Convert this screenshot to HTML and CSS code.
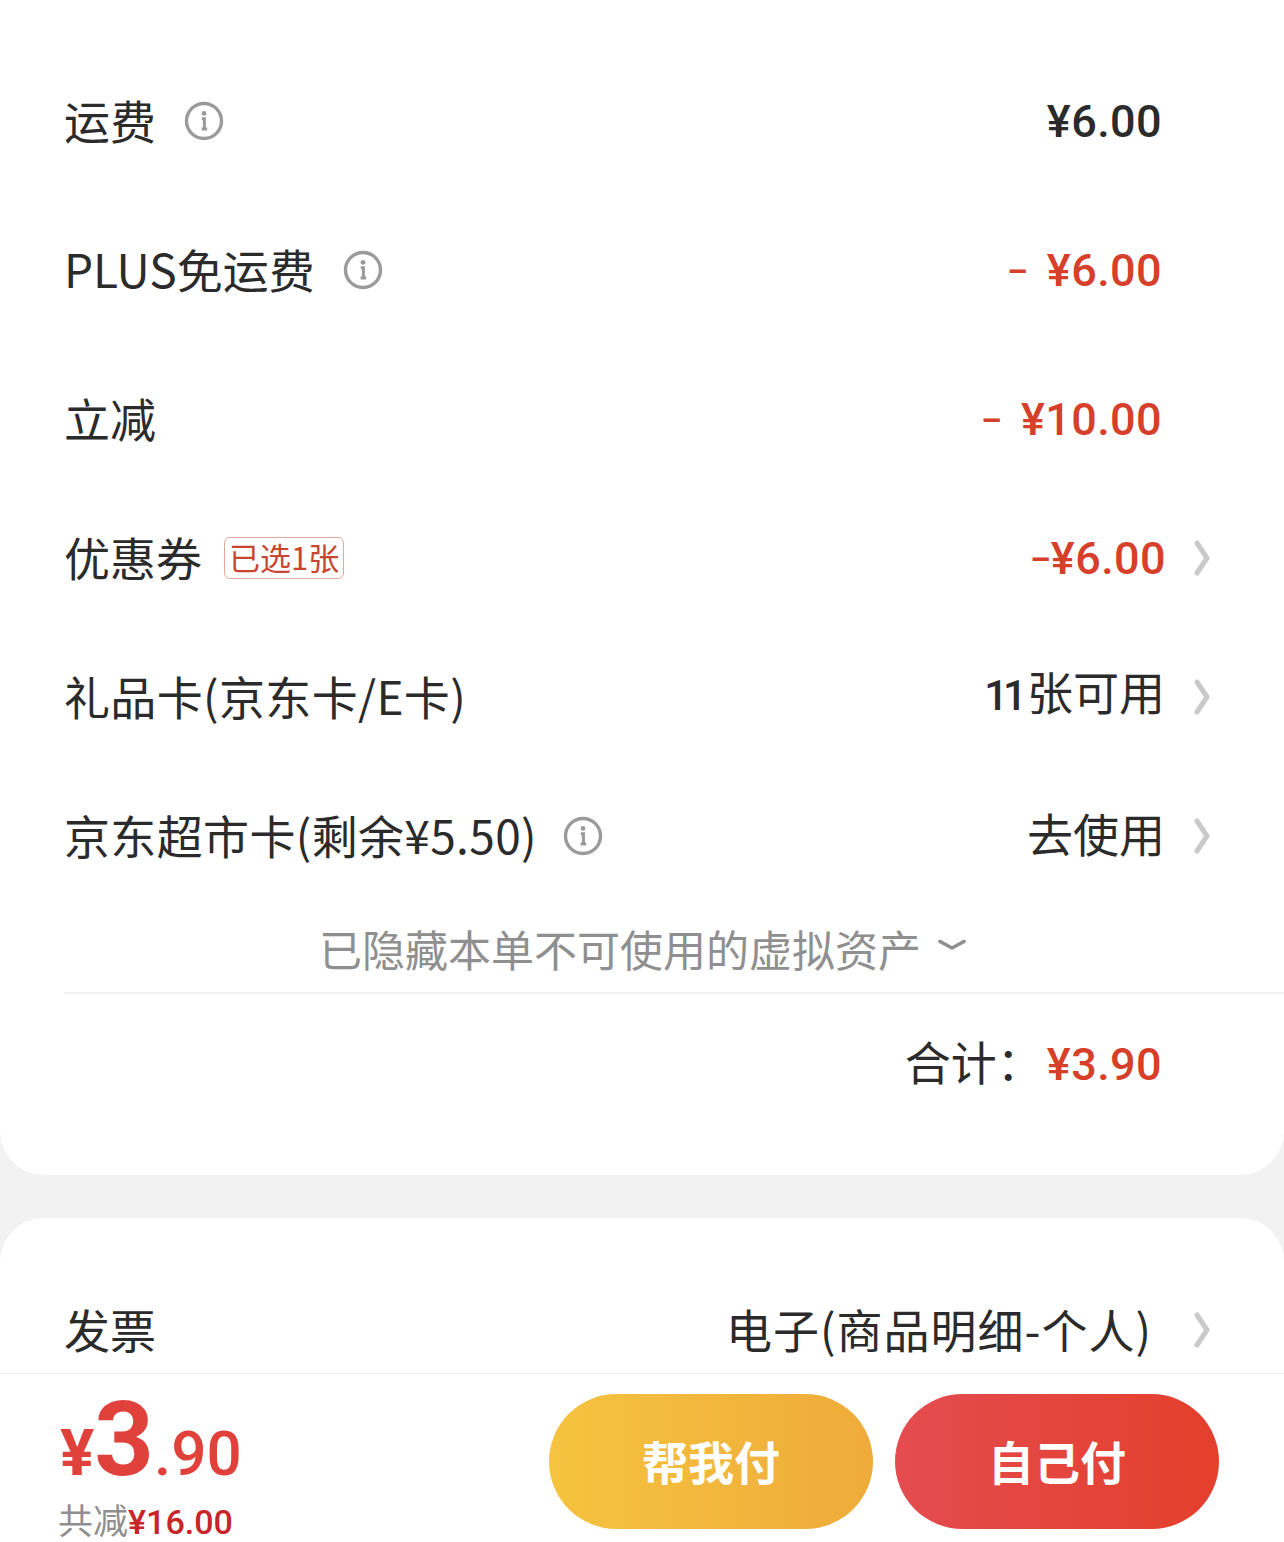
FILE: index.html
```html
<!DOCTYPE html>
<html lang="zh-CN">
<head>
<meta charset="utf-8">
<title>订单结算</title>
<link rel="stylesheet" href="styles.css">
</head>
<body>
<svg class="defs" width="0" height="0" aria-hidden="true">
  <symbol id="info" viewBox="0 0 40 40">
    <circle cx="20" cy="20" r="17.5" fill="none" stroke="#9a9a9a" stroke-width="3.4"/>
    <circle cx="20" cy="12.400" r="2.400" fill="#9a9a9a"/>
    <path d="M17.800 17.800h2.600v9.800M17.600 28h5.600" fill="none" stroke="#9a9a9a" stroke-width="3"/>
  </symbol>
  <symbol id="chev" viewBox="0 0 16 36">
    <path d="M3 3 13 18 3 33" fill="none" stroke="#c9c9c9" stroke-width="5" stroke-linecap="round" stroke-linejoin="round"/>
  </symbol>
</svg>
<main class="page">
  <section class="card card-top">
    <div class="row row-spaced">
      <div class="label">运费<svg class="info"><use href="#info"/></svg></div>
      <div class="value plain num">¥6.00</div>
    </div>
    <div class="row row-spaced">
      <div class="label">PLUS免运费<svg class="info"><use href="#info"/></svg></div>
      <div class="value plain num red"><span class="minus minus-gap">–</span>¥6.00</div>
    </div>
    <div class="row">
      <div class="label">立减</div>
      <div class="value plain num red"><span class="minus minus-gap">–</span>¥10.00</div>
    </div>
    <div class="row">
      <div class="label">优惠券<span class="tag">已选1张</span></div>
      <div class="value link num red coupon"><span class="minus">–</span>¥6.00<svg class="chev"><use href="#chev"/></svg></div>
    </div>
    <div class="row">
      <div class="label label-wide">礼品卡(京东卡/E卡)</div>
      <div class="value link"><span><span class="num-bold">11</span>张可用</span><svg class="chev"><use href="#chev"/></svg></div>
    </div>
    <div class="row">
      <div class="label label-wide">京东超市卡(剩余¥5.50)<svg class="info info-near"><use href="#info"/></svg></div>
      <div class="value link">去使用<svg class="chev"><use href="#chev"/></svg></div>
    </div>
    <div class="hidden-note">已隐藏本单不可使用的虚拟资产
      <svg class="note-chev" viewBox="0 0 30 14"><path d="M3 3.500 15 10 27 3.500" fill="none" stroke="#8f8f8f" stroke-width="3.600" stroke-linecap="round" stroke-linejoin="round"/></svg>
    </div>
    <div class="total">
      <span class="total-label">合计：</span><span class="num red">¥3.90</span>
    </div>
  </section>
  <section class="card card-second">
    <div class="row">
      <div class="label">发票</div>
      <div class="value link invoice">电子(商品明细-个人)<svg class="chev"><use href="#chev"/></svg></div>
    </div>
  </section>
  <footer class="bar">
    <div class="price">
      <div class="price-main"><span class="yen">¥</span><span class="big">3</span><span class="cents">.90</span></div>
      <div class="saved">共减<span class="saved-num">¥16.00</span></div>
    </div>
    <div class="actions">
      <button class="btn btn-help">帮我付</button>
      <button class="btn btn-self">自己付</button>
    </div>
  </footer>
</main>
</body>
</html>
```
FILE: styles.css
```css
* { box-sizing: border-box; }
html, body { margin: 0; padding: 0; }
body {
  width: 1284px;
  height: 1542px;
  overflow: hidden;
  background: #f2f2f2;
  color: #2b2b2b;
  font-family: "Noto Sans CJK SC", "Noto Sans", sans-serif;
}
.defs { position: absolute; }
.page { display: flex; flex-direction: column; height: 1542px; }
.card { background: #fff; }
.card-top {
  height: 1175px;
  padding-top: 51px;
  border-radius: 0 0 44px 44px;
  margin-bottom: 43px;
}
.card-second {
  height: 155px;
  padding-top: 42px;
  border-radius: 44px 44px 0 0;
  overflow: hidden;
}
.row {
  display: flex;
  align-items: center;
  justify-content: space-between;
  height: 139px;
  padding-left: 64px;
}
.row-spaced { margin-bottom: 10px; }
.label {
  display: flex;
  align-items: center;
  padding-bottom: 3px;
  font-size: 46px;
  line-height: 60px;
}
.label-wide { letter-spacing: 0.35px; }
.info { width: 40px; height: 40px; margin: 3px 0 0 28px; }
.info-near { margin-left: 26px; }
.tag {
  display: inline-block;
  margin: 4px 0 0 22px;
  height: 42px;
  padding: 0 4px;
  border: 1px solid #e2a99c;
  border-radius: 6px;
  color: #c8452f;
  font-size: 31px;
  line-height: 38px;
}
.value {
  display: flex;
  align-items: center;
  padding-bottom: 8px;
  font-size: 46px;
  line-height: 60px;
}
.plain { padding-right: 122px; }
.link { padding-right: 74px; }
.chev { width: 16px; height: 36px; margin: 8px 0 0 29px; }
.coupon .chev { margin: 0 0 2px 28px; }
.invoice { padding-bottom: 4px; letter-spacing: 1px; }
.invoice .chev { margin: 4px 0 0 42px; }
.num {
  padding-top: 2px;
  padding-bottom: 0;
  font-family: Roboto, "Noto Sans CJK SC", sans-serif;
  font-weight: 500;
  font-size: 45px;
  letter-spacing: 0.4px;
}
.num-bold {
  font-family: Roboto, sans-serif;
  font-weight: 500;
  font-size: 42px;
  letter-spacing: -5px;
  margin-right: 5px;
}
.red { color: #d6402a; }
.minus { font-size: 32px; font-weight: 700; }
.minus-gap { margin-right: 19px; }
.hidden-note {
  display: flex;
  align-items: center;
  justify-content: center;
  gap: 16px;
  height: 87px;
  margin-left: 2px;
  padding-bottom: 2px;
  color: #8f8f8f;
  font-size: 43px;
}
.note-chev { width: 30px; height: 14px; margin-top: -6px; }
.total {
  display: flex;
  align-items: center;
  justify-content: flex-end;
  height: 142px;
  margin-left: 64px;
  padding: 0 122px 2px 0;
  border-top: 2px solid #f2f2f2;
  font-size: 46px;
}
.total-label { margin-right: 4px; padding-bottom: 6px; }
.bar {
  display: flex;
  align-items: flex-start;
  justify-content: space-between;
  height: 169px;
  padding: 20px 65px 0 60px;
  background: #fff;
  border-top: 1px solid #eeeeee;
}
.price { display: flex; flex-direction: column; margin-top: -4px; }
.price-main {
  display: flex;
  align-items: baseline;
  height: 100px;
  color: #e0413a;
  font-family: Roboto, sans-serif;
  font-weight: 500;
  line-height: 100px;
}
.yen { font-size: 64px; font-weight: 700; }
.big { font-size: 104px; font-weight: 700; }
.cents { font-size: 62px; }
.saved {
  margin-top: 7px;
  margin-left: -2px;
  color: #8f8f8f;
  font-size: 35px;
  line-height: 44px;
}
.saved-num {
  color: #c6252a;
  font-family: Roboto, sans-serif;
  font-weight: 500;
  font-size: 34px;
}
.actions { display: flex; gap: 22px; }
.btn {
  width: 324px;
  height: 135px;
  padding: 0 0 4px;
  border: 0;
  border-radius: 68px;
  color: #fff;
  font-family: "Noto Sans CJK SC", sans-serif;
  font-size: 46px;
  font-weight: 700;
}
.btn-help { background: linear-gradient(90deg, #f5c33f, #efab3a); }
.btn-self { background: linear-gradient(90deg, #e44c50, #e43f2b); }
```
